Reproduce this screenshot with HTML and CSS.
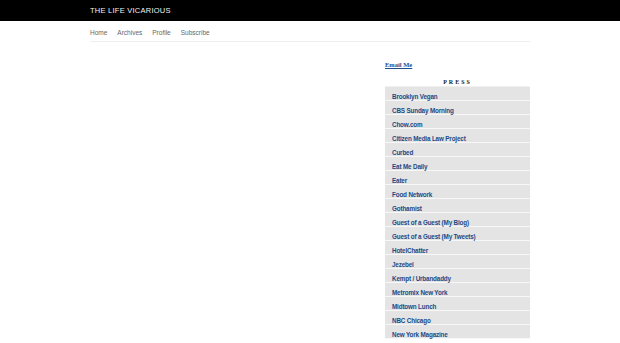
FILE: index.html
```html
<!DOCTYPE html>
<html lang="en">
<head>
    <meta charset="UTF-8">
    <title>The Life Vicarious</title>
    <link rel="stylesheet" href="styles.css">
</head>
<body>
    <div class="banner">
        <div class="wrap">
            <a class="site-title" href="#">THE LIFE VICARIOUS</a>
        </div>
    </div>
    <div class="wrap">
        <ul class="nav">
            <li><a href="#">Home</a></li>
            <li><a href="#">Archives</a></li>
            <li><a href="#">Profile</a></li>
            <li><a href="#">Subscribe</a></li>
        </ul>
        <div class="columns">
            <div class="main"></div>
            <div class="sidebar">
                <a class="email" href="#">Email Me</a>
                <h3 class="module-title">PRESS</h3>
                <ul class="press">
                    <li><a href="#">Brooklyn Vegan</a></li>
                    <li><a href="#">CBS Sunday Morning</a></li>
                    <li><a href="#">Chow.com</a></li>
                    <li><a href="#">Citizen Media Law Project</a></li>
                    <li><a href="#">Curbed</a></li>
                    <li><a href="#">Eat Me Daily</a></li>
                    <li><a href="#">Eater</a></li>
                    <li><a href="#">Food Network</a></li>
                    <li><a href="#">Gothamist</a></li>
                    <li><a href="#">Guest of a Guest (My Blog)</a></li>
                    <li><a href="#">Guest of a Guest (My Tweets)</a></li>
                    <li><a href="#">HotelChatter</a></li>
                    <li><a href="#">Jezebel</a></li>
                    <li><a href="#">Kempt / Urbandaddy</a></li>
                    <li><a href="#">Metromix New York</a></li>
                    <li><a href="#">Midtown Lunch</a></li>
                    <li><a href="#">NBC Chicago</a></li>
                    <li><a href="#">New York Magazine</a></li>
                </ul>
            </div>
        </div>
    </div>
</body>
</html>
```

FILE: styles.css
```css
body {
    margin: 0;
    background: #fff;
    font-family: "Liberation Sans", Arial, sans-serif;
}

.wrap {
    width: 440px;
    margin: 0 auto;
}

.banner {
    background: #000;
    height: 21px;
}

.site-title {
    display: block;
    color: #f2f2f2;
    text-decoration: none;
    font-size: 7.5px;
    letter-spacing: 0.25px;
    line-height: 21px;
}

.nav {
    list-style: none;
    margin: 0;
    padding: 0;
    display: flex;
    gap: 10px;
    height: 20px;
    align-items: center;
    border-bottom: 1px solid #eee;
}

.nav a {
    color: #666;
    text-decoration: none;
    font-size: 6.5px;
    position: relative;
    top: -1px;
}

.columns {
    display: flex;
    justify-content: space-between;
}

.sidebar {
    width: 145px;
    padding-top: 18px;
}

.email {
    display: block;
    font-family: "Liberation Serif", serif;
    font-weight: bold;
    font-size: 6.5px;
    color: #1f4e8c;
    line-height: 9px;
}

.module-title {
    margin: 9px 0 0;
    text-align: center;
    font-family: "Liberation Serif", serif;
    font-size: 6px;
    letter-spacing: 2px;
    line-height: 8px;
    color: #222;
}

.press {
    list-style: none;
    margin: 0;
    padding: 0;
    border-top: 1px solid #f0f0f0;
}

.press li {
    background: #e4e4e4;
    border-bottom: 1px solid #f7f7f7;
    height: 13px;
    line-height: 13px;
    padding-left: 7px;
}

.press a {
    color: #1a4a86;
    text-decoration: none;
    font-size: 6.3px;
    font-weight: bold;
    letter-spacing: -0.15px;
}
```
